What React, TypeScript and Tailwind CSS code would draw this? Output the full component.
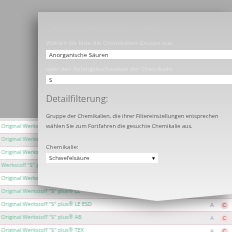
export default function App() {
  const rows = [
    'Original Werkstoff "S" plus® HT',
    'Original Werkstoff "S" plus®',
    'Original Werkstoff "S" plus® ST',
    'Werkstoff "S" plus® Spezial',
    'Original Werkstoff "S"',
    'Original Werkstoff "S" plus® LE',
    'Original Werkstoff "S" plus® LE ESD',
    'Original Werkstoff "S" plus® AB',
    'Original Werkstoff "S" plus® TEX',
  ];
  return (
    <div className="relative w-[232px] h-[232px] overflow-hidden bg-[#aaaaaa] font-['Open_Sans',sans-serif]">
      <div className="flex flex-col pt-[118px]">
        <div className="h-[3px] bg-[#e4e4e4]" />
        {rows.map((r, i) => (
          <div
            key={i}
            className={i % 2 === 0 ? 'flex h-[13px] items-center border-b border-[#ead6dc] bg-white pl-px pr-[4px]' : 'flex h-[13px] items-center border-b border-[#ead6dc] bg-[#ebebeb] pl-px pr-[4px]'}
          >
            <span className="flex-1 whitespace-nowrap text-[5.5px] leading-none text-[#6cc3a5]">{r}</span>
            <span className="w-[11px] text-[6px] leading-none text-[#a8a8a8]">A</span>
            <span className="flex h-[7px] w-[7px] items-center justify-center rounded-full bg-[#f6dada] text-[6px] leading-none text-[#d64545]">C</span>
          </div>
        ))}
      </div>
      <div className="absolute left-[38px] top-[12px] h-[190px] w-[194px] drop-shadow-[-4px_6px_7px_rgba(0,0,0,0.42)]">
        <div className="flex h-full w-full flex-col overflow-hidden bg-gradient-to-b from-[#c4c4c4] to-[#f2f2f2] pl-[8px] [clip-path:polygon(0_0,100%_0,100%_182px,119px_189px,0_173px)]">
          <div className="mt-[10px] h-[12px] whitespace-nowrap text-[9px] leading-[12px] text-[#cacaca]">Chemikalien-Schnellauswahl:</div>
          <div className="mt-[5px] h-[8px] whitespace-nowrap text-[6px] leading-[8px] text-[#dedede]">Wählen Sie bitte die Chemikalien-Gruppe aus:</div>
          <div className="mt-[3px] flex h-[9px] w-[200px] items-center bg-white pl-[3px] text-[6px] leading-none text-[#444]">Anorganische Säuren</div>
          <div className="mt-[6px] h-[8px] whitespace-nowrap text-[6px] leading-[8px] text-[#e2e2e2]">oder den Anfangsbuchstaben der Chemikalie:</div>
          <div className="mt-[2px] flex h-[9px] w-[200px] items-center bg-white pl-[3px] text-[6px] leading-none text-[#444]">S</div>
          <div className="mt-[9px] h-[12px] whitespace-nowrap text-[9px] leading-[12px] text-[#777777]">Detailfilterung:</div>
          <div className="mt-[6px] flex h-[20px] flex-col whitespace-nowrap text-[5.6px] leading-[10px] text-[#5c5c5c]">
            <span className="h-[10px]">Gruppe der Chemikalien, die ihrer Filtereinstellungen entsprechen</span>
            <span className="h-[10px]">wählen Sie zum Fortfahren die gesuchte Chemikalie aus.</span>
          </div>
          <div className="mt-[12px] h-[8px] text-[6px] leading-[8px] text-[#666]">Chemikalie:</div>
          <div className="mt-[2px] flex h-[10px] w-[112px] items-center justify-between bg-white pl-[3px] pr-[2px] text-[6px] leading-none text-[#444]">
            <span>Schwefelsäure</span>
            <span className="text-[5px] text-black">▼</span>
          </div>
        </div>
      </div>
    </div>
  );
}
